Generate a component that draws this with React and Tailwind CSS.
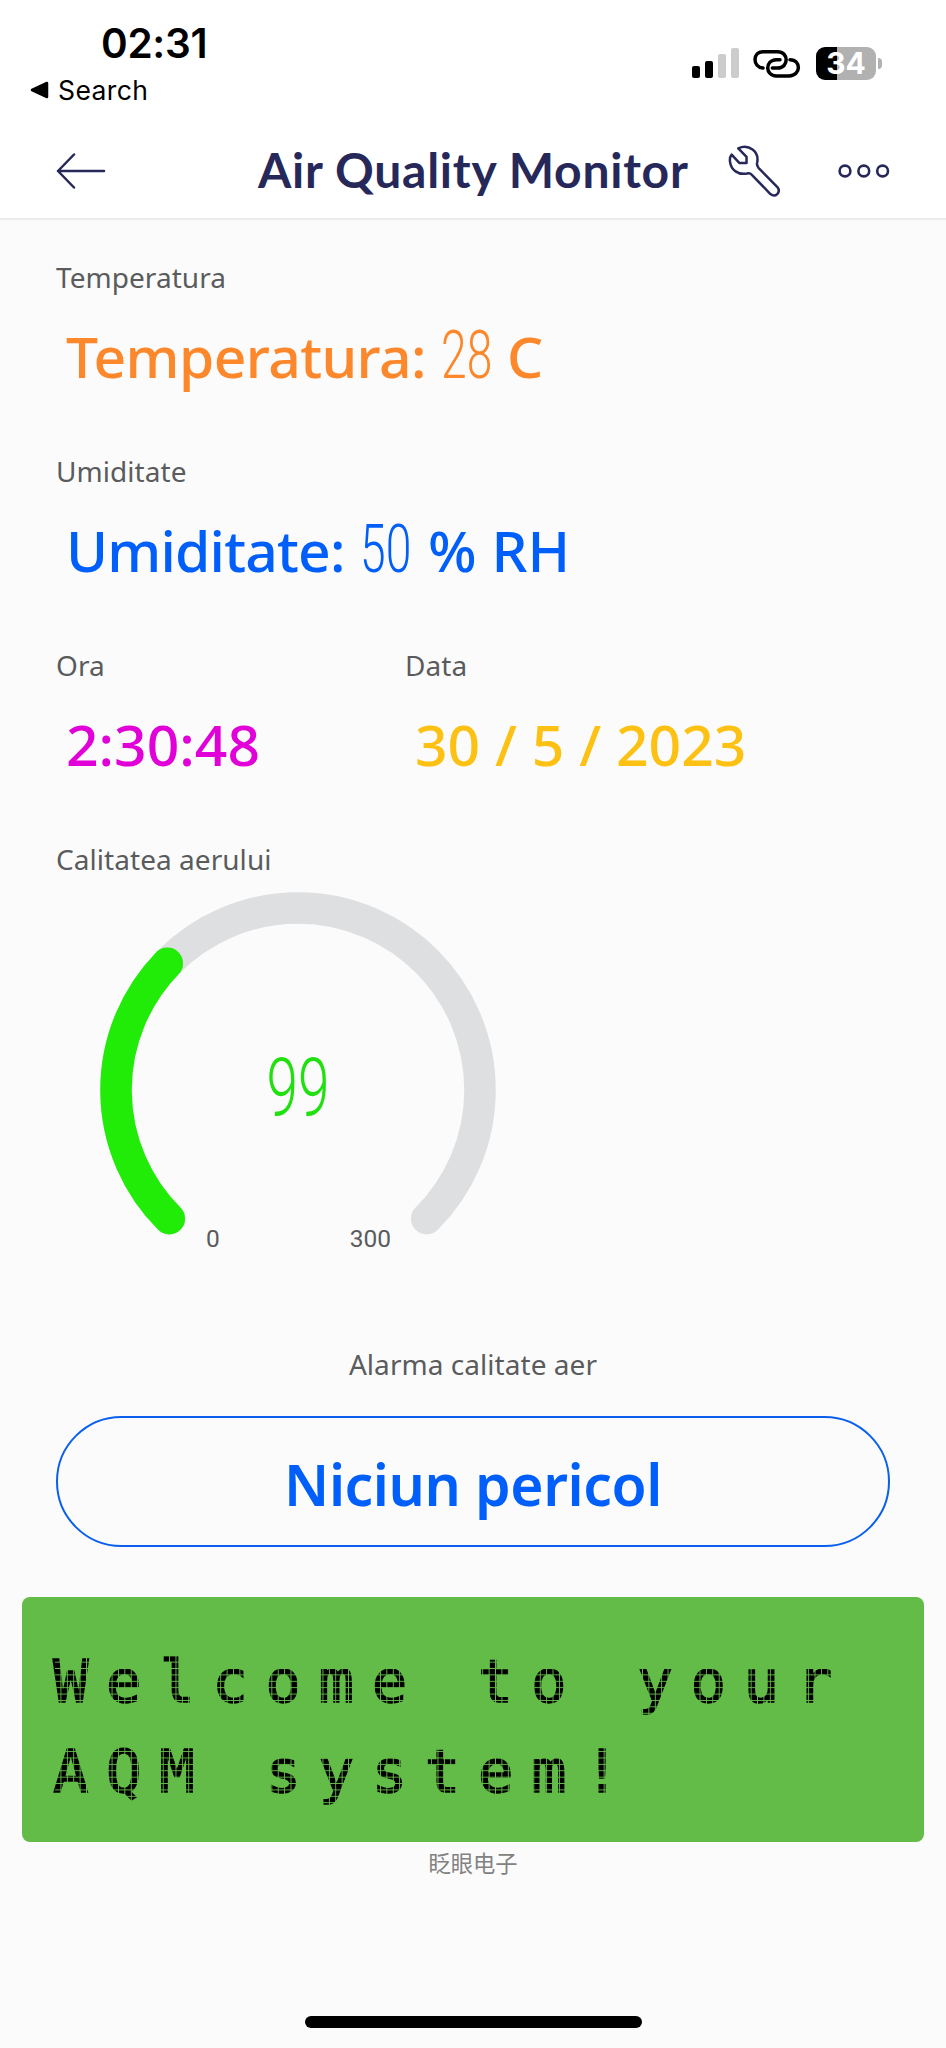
import React from 'react';

const SIGNAL_BARS = [
  { height: 'h-[12px]', color: 'bg-black' },
  { height: 'h-[17px]', color: 'bg-black' },
  { height: 'h-[24px]', color: 'bg-[#cccccc]' },
  { height: 'h-[30px]', color: 'bg-[#cccccc]' },
];

function StatusBar() {
  return (
    <div className="flex h-[124px] items-start justify-between font-['Inter',sans-serif] text-black">
      <div className="pl-[30px] pt-[20px]">
        <div className="h-[48px] pl-[71px] text-[40.5px] font-semibold leading-[48px] tracking-[-0.3px]">02:31</div>
        <div className="flex h-[44px] items-center gap-[9px] text-[26.5px] leading-[44px] tracking-[0.4px]">
          <svg width="19" height="18" viewBox="0 0 19 18">
            <path d="M2 9 L17 2 V16 Z" fill="black" stroke="black" strokeWidth="2.5" strokeLinejoin="round" />
          </svg>
          <span>Search</span>
        </div>
      </div>

      <div className="mt-[46px] flex h-[34px] items-center pr-[64px]">
        <div className="flex h-[30px] items-end gap-[5px]">
          {SIGNAL_BARS.map((bar, i) => (
            <div key={i} className={`w-[8px] rounded-[2px] ${bar.height} ${bar.color}`} />
          ))}
        </div>
        <svg className="ml-[14px]" width="48" height="29" viewBox="840 146 144 87" fill="none" stroke="black" strokeWidth="10.5" strokeLinecap="round">
          <path d="M870 203 C838 200 838 154 870 154 H914 C948 154 948 203 914 203 H898" />
          <path d="M921 178 H910 C875 180 876 226 910 227 H948 C985 226 985 178 951 178" />
        </svg>
        <div className="ml-[15px] flex h-[33px] w-[60px] items-center justify-center rounded-[9px] bg-[linear-gradient(90deg,#000_35%,#b1b1b1_35%)] text-[30px] font-bold leading-none text-white">
          34
        </div>
        <div className="ml-[2px] h-[11px] w-[4px] rounded-r-full bg-[#b1b1b1]" />
      </div>
    </div>
  );
}

function Header() {
  return (
    <header className="flex h-[96px] items-start border-b-2 border-[#ececee] pl-[56px] text-[#26285a]">
      <svg className="mt-[29px]" width="50" height="36" viewBox="0 0 50 36" fill="none" stroke="currentColor" strokeWidth="2.5" strokeLinecap="round" strokeLinejoin="round">
        <path d="M48 18 H2 M18 1.5 L2 18 L18 34.5" />
      </svg>
      <h1 className="ml-[152px] w-[434px] whitespace-nowrap font-['Lato',sans-serif] text-[48px] font-bold leading-[92px] tracking-[0.75px]">
        Air Quality Monitor
      </h1>
      <svg className="ml-[36px] mt-[21px]" width="53" height="53" viewBox="765 435 160 160" fill="none" stroke="currentColor" strokeWidth="7.5" strokeLinejoin="round">
        <path d="M796 445 C828 430 860 456 853 488 Q851 496 857 504 L914 562 C926 578 908 595 893 583 L837 525 Q831 518 822 521 C796 526 774 511 771 485 C770 476 771 470 776 464 L799 489 H821 V471 Z" />
      </svg>
      <svg className="ml-[57px] mt-[40px]" width="52" height="14" viewBox="0 0 52 14" fill="none" stroke="currentColor" strokeWidth="2.6">
        <circle cx="7" cy="7" r="5.4" />
        <circle cx="25.8" cy="7" r="5.4" />
        <circle cx="44.6" cy="7" r="5.4" />
      </svg>
    </header>
  );
}

function Label({ children }) {
  return <div className="h-[40px] text-[28px] leading-[40px] tracking-[0.05px] text-[#5a5b5d]">{children}</div>;
}

// Narrow light digits used for live readings
function Reading({ children }) {
  return (
    <span className="inline-block w-[52px] origin-left scale-x-[0.7] font-['Roboto',sans-serif] text-[66px] font-light leading-none">
      {children}
    </span>
  );
}

function Widget({ label, color, children }) {
  return (
    <div className="h-[194px]">
      <Label>{label}</Label>
      <div className={`mt-[20px] flex h-[78px] items-baseline whitespace-nowrap pl-[10px] text-[57px] font-medium leading-[79px] ${color}`}>
        {children}
      </div>
    </div>
  );
}

const polar = (deg) => {
  const rad = (deg * Math.PI) / 180;
  return `${198 + 182 * Math.cos(rad)} ${198 + 182 * Math.sin(rad)}`;
};

function Gauge({ value, min, max }) {
  const end = 135 + ((value - min) / (max - min)) * 270;
  return (
    <div className="relative ml-[44px] h-[396px] w-[396px]">
      <svg width="396" height="396" viewBox="0 0 396 396" fill="none" strokeWidth="31.5" strokeLinecap="round">
        <path d={`M${polar(135)} A182 182 0 1 1 ${polar(45)}`} stroke="#dedfe1" />
        <path d={`M${polar(135)} A182 182 0 0 1 ${polar(end)}`} stroke="#20ec08" />
      </svg>
      <div className="absolute inset-x-0 top-[153px] text-center font-['Roboto',sans-serif] text-[81px] font-light leading-[88px] text-[#20e010]">
        <span className="inline-block scale-x-[0.7]">{value}</span>
      </div>
      <div className="absolute left-[106px] top-[332px] flex w-[185px] justify-between font-['Roboto',sans-serif] text-[24.5px] leading-[30px] text-[#5a5b5d]">
        <span>{min}</span>
        <span>{max}</span>
      </div>
    </div>
  );
}

// Character display, the grid on top splits the strokes into dots
function LcdDisplay({ lines }) {
  return (
    <div className="mx-[22px] h-[245px] rounded-[8px] bg-[#62bc47] pl-[33px] pt-[40px]">
      <div className="relative font-['DejaVu_Sans_Mono',monospace] text-[59px] tracking-[17.6px] text-black [-webkit-text-stroke:1.4px_black]">
        {lines.map((line) => (
          <div key={line} className="-ml-[2px] h-[90px] whitespace-pre leading-[90px]">
            {line}
          </div>
        ))}
        <div className="absolute inset-0 bg-[linear-gradient(90deg,transparent_5.2px,#62bc47_5.2px),linear-gradient(transparent_5.2px,#62bc47_5.2px)] bg-size-[6.4px_6.4px]" />
      </div>
    </div>
  );
}

export default function App() {
  return (
    <div className="flex h-[2048px] w-[946px] flex-col overflow-hidden bg-[#fbfbfb] font-['Noto_Sans','Noto_Sans_CJK_SC',sans-serif]">
      <div className="bg-white">
        <StatusBar />
        <Header />
      </div>

      <main className="pt-[37px]">
        <div className="pl-[56px]">
          <Widget label="Temperatura" color="text-[#fd872b]">
            <span className="w-[375px] tracking-[-0.6px]">Temperatura:</span>
            <Reading>28</Reading>
            <span className="ml-[14px]">C</span>
          </Widget>
          <Widget label="Umiditate" color="text-[#005ffb]">
            <span className="w-[294px] tracking-[-0.8px]">Umiditate:</span>
            <Reading>50</Reading>
            <span className="ml-[16px]">% RH</span>
          </Widget>
          <div className="flex">
            <div className="w-[349px]">
              <Widget label="Ora" color="text-[#e200d8]">2:30:48</Widget>
            </div>
            <Widget label="Data" color="text-[#fdc113]">30 / 5 / 2023</Widget>
          </div>
          <Label>Calitatea aerului</Label>
          <div className="mt-[13px]">
            <Gauge value={99} min={0} max={300} />
          </div>
        </div>

        <div className="mt-[56px] text-center">
          <Label>Alarma calitate aer</Label>
        </div>
        <div className="mx-[56px] mt-[32px] flex h-[131px] items-center justify-center rounded-full border-2 border-[#0a5fee] pt-[6px] text-[57px] font-semibold leading-none tracking-[-0.4px] text-[#005ffb]">
          Niciun pericol
        </div>

        <div className="mt-[50px]">
          <LcdDisplay lines={['Welcome to your', 'AQM system!']} />
        </div>
        <div className="mt-[4px] text-center font-['Noto_Sans_CJK_SC',sans-serif] text-[22.3px] leading-[32px] text-[#828282]">眨眼电子</div>
      </main>

      <div className="mx-auto mb-[20px] mt-auto h-[12px] w-[337px] rounded-full bg-black" />
    </div>
  );
}
